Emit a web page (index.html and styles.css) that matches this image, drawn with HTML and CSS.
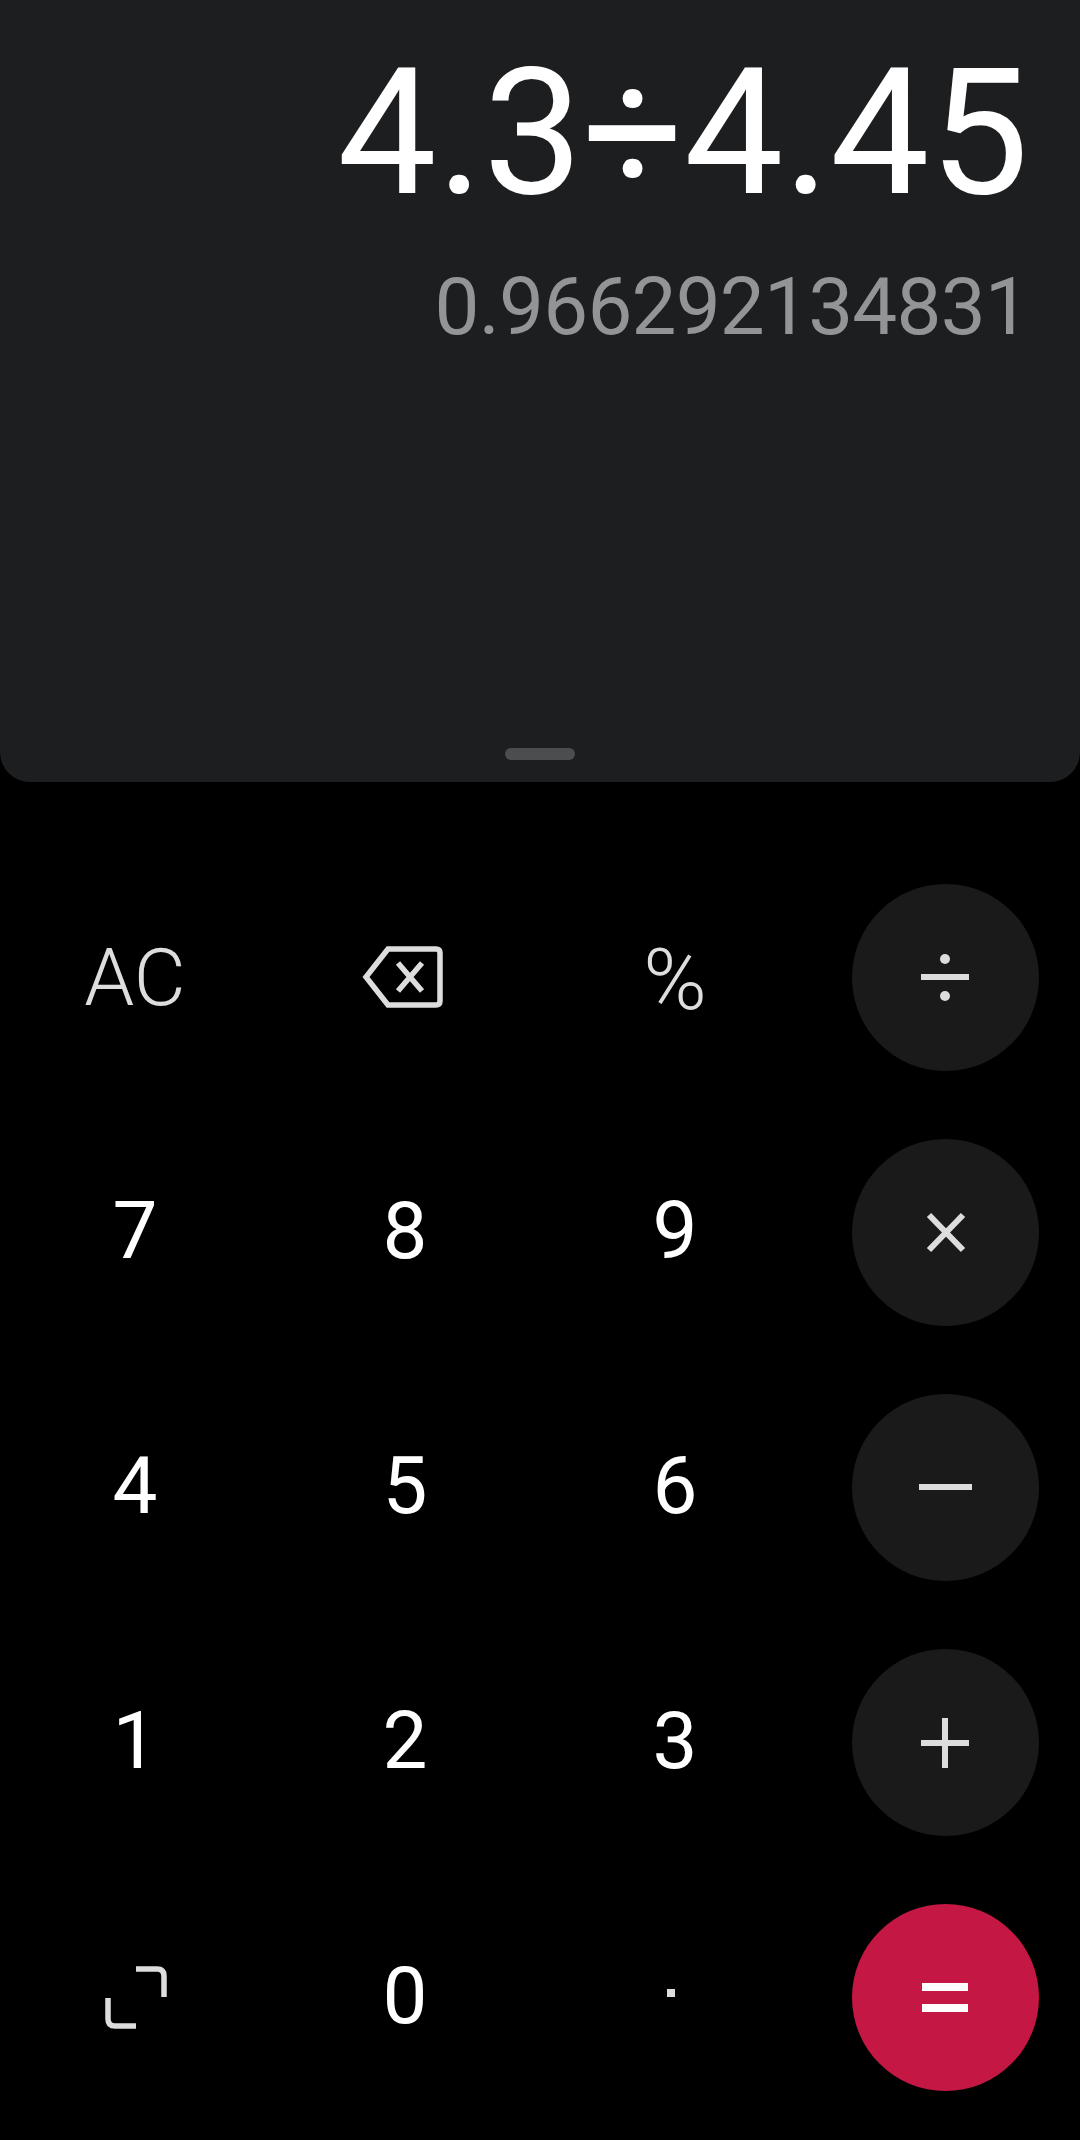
FILE: index.html
```html
<!DOCTYPE html>
<html lang="en">
<head>
<meta charset="utf-8">
<title>Calculator</title>
<link rel="stylesheet" href="styles.css">
</head>
<body>
<main class="calc">
  <section class="display">
    <div class="expr">4.3÷4.45</div>
    <div class="result">0.966292134831</div>
    <div class="handle"></div>
  </section>
  <section class="keys">
    <div class="key fn">AC</div>
    <div class="key"><svg class="ico" width="100" height="80" viewBox="0 0 100 80"><path class="ln5" d="M33 11 H81 Q85 11 85 15 V63 Q85 67 81 67 H33 L11 39 Z"/><path class="ln5" d="M43 25 L67 53 M67 25 L43 53"/></svg></div>
    <div class="key fn pct">%</div>
    <div class="key op"><svg class="ico" width="187" height="187" viewBox="0 0 187 187"><rect class="fl" x="69" y="90" width="48" height="6"/><circle class="fl" cx="93" cy="75" r="5"/><circle class="fl" cx="93" cy="112" r="5"/></svg></div>

    <div class="key num">7</div><div class="key num">8</div><div class="key num">9</div>
    <div class="key op"><svg class="ico" width="187" height="187" viewBox="0 0 187 187"><path class="ln6" d="M77 76 L111 111 M111 76 L77 111"/></svg></div>

    <div class="key num">4</div><div class="key num">5</div><div class="key num">6</div>
    <div class="key op"><svg class="ico" width="187" height="187" viewBox="0 0 187 187"><rect class="fl" x="67" y="90" width="53" height="6"/></svg></div>

    <div class="key num">1</div><div class="key num">2</div><div class="key num">3</div>
    <div class="key op"><svg class="ico" width="187" height="187" viewBox="0 0 187 187"><rect class="fl" x="69" y="91" width="48" height="6"/><rect class="fl" x="90" y="69" width="6" height="50"/></svg></div>

    <div class="key"><svg class="ico" width="100" height="100" viewBox="0 0 100 100"><path class="ln5" d="M51 21 H72 Q79 21 79 28 V49 M23 50 V71 Q23 78 30 78 H51"/></svg></div>
    <div class="key num">0</div>
    <div class="key"><span class="dot"></span></div>
    <div class="key op eq"><svg class="ico" width="187" height="187" viewBox="0 0 187 187"><rect class="wh" x="70" y="79" width="46" height="8"/><rect class="wh" x="70" y="100" width="46" height="8"/></svg></div>
  </section>
</main>
</body>
</html>
```
FILE: styles.css
```css
html, body {
  margin: 0;
  padding: 0;
  background: #000;
}
.calc {
  width: 1080px;
  height: 2140px;
  font-family: Roboto, "Liberation Sans", sans-serif;
  background: #000;
  overflow: hidden;
}
.display {
  position: relative;
  box-sizing: border-box;
  height: 782px;
  padding: 29px 51px 0 0;
  background: #1d1e20;
  border-radius: 0 0 30px 30px;
  text-align: right;
}
.expr {
  font-size: 177px;
  line-height: 208px;
  color: #fff;
}
.result {
  margin-top: 25px;
  font-size: 80px;
  line-height: 90px;
  font-weight: 400;
  letter-spacing: -0.8px;
  color: #939496;
}
.handle {
  position: absolute;
  left: 505px;
  top: 748px;
  width: 70px;
  height: 12px;
  border-radius: 6px;
  background: #4c4d4f;
}
.keys {
  display: grid;
  grid-template-columns: repeat(4, 270px);
  grid-auto-rows: 255px;
  padding-top: 68px;
}
.key {
  display: flex;
  align-items: center;
  justify-content: center;
  font-size: 80px;
  color: #fff;
}
.num {
  padding-bottom: 3px;
}
.fn {
  font-size: 80px;
  font-weight: 300;
  color: #ddd;
}
.pct {
  font-size: 86px;
  padding-top: 3px;
}
.op {
  width: 187px;
  height: 187px;
  place-self: center;
  border-radius: 50%;
  background: #1a1a1a;
}
.eq {
  background: #c41743;
}
.ico {
  display: block;
  fill: none;
}
.fl {
  fill: #ddd;
}
.wh {
  fill: #fff;
}
.ln5, .ln6 {
  fill: none;
  stroke: #ddd;
}
.ln5 { stroke-width: 5.5px; }
.ln6 { stroke-width: 6px; }
.dot {
  width: 8px;
  height: 8px;
  background: #ddd;
  margin-top: -10px;
  margin-left: -8px;
}
```
